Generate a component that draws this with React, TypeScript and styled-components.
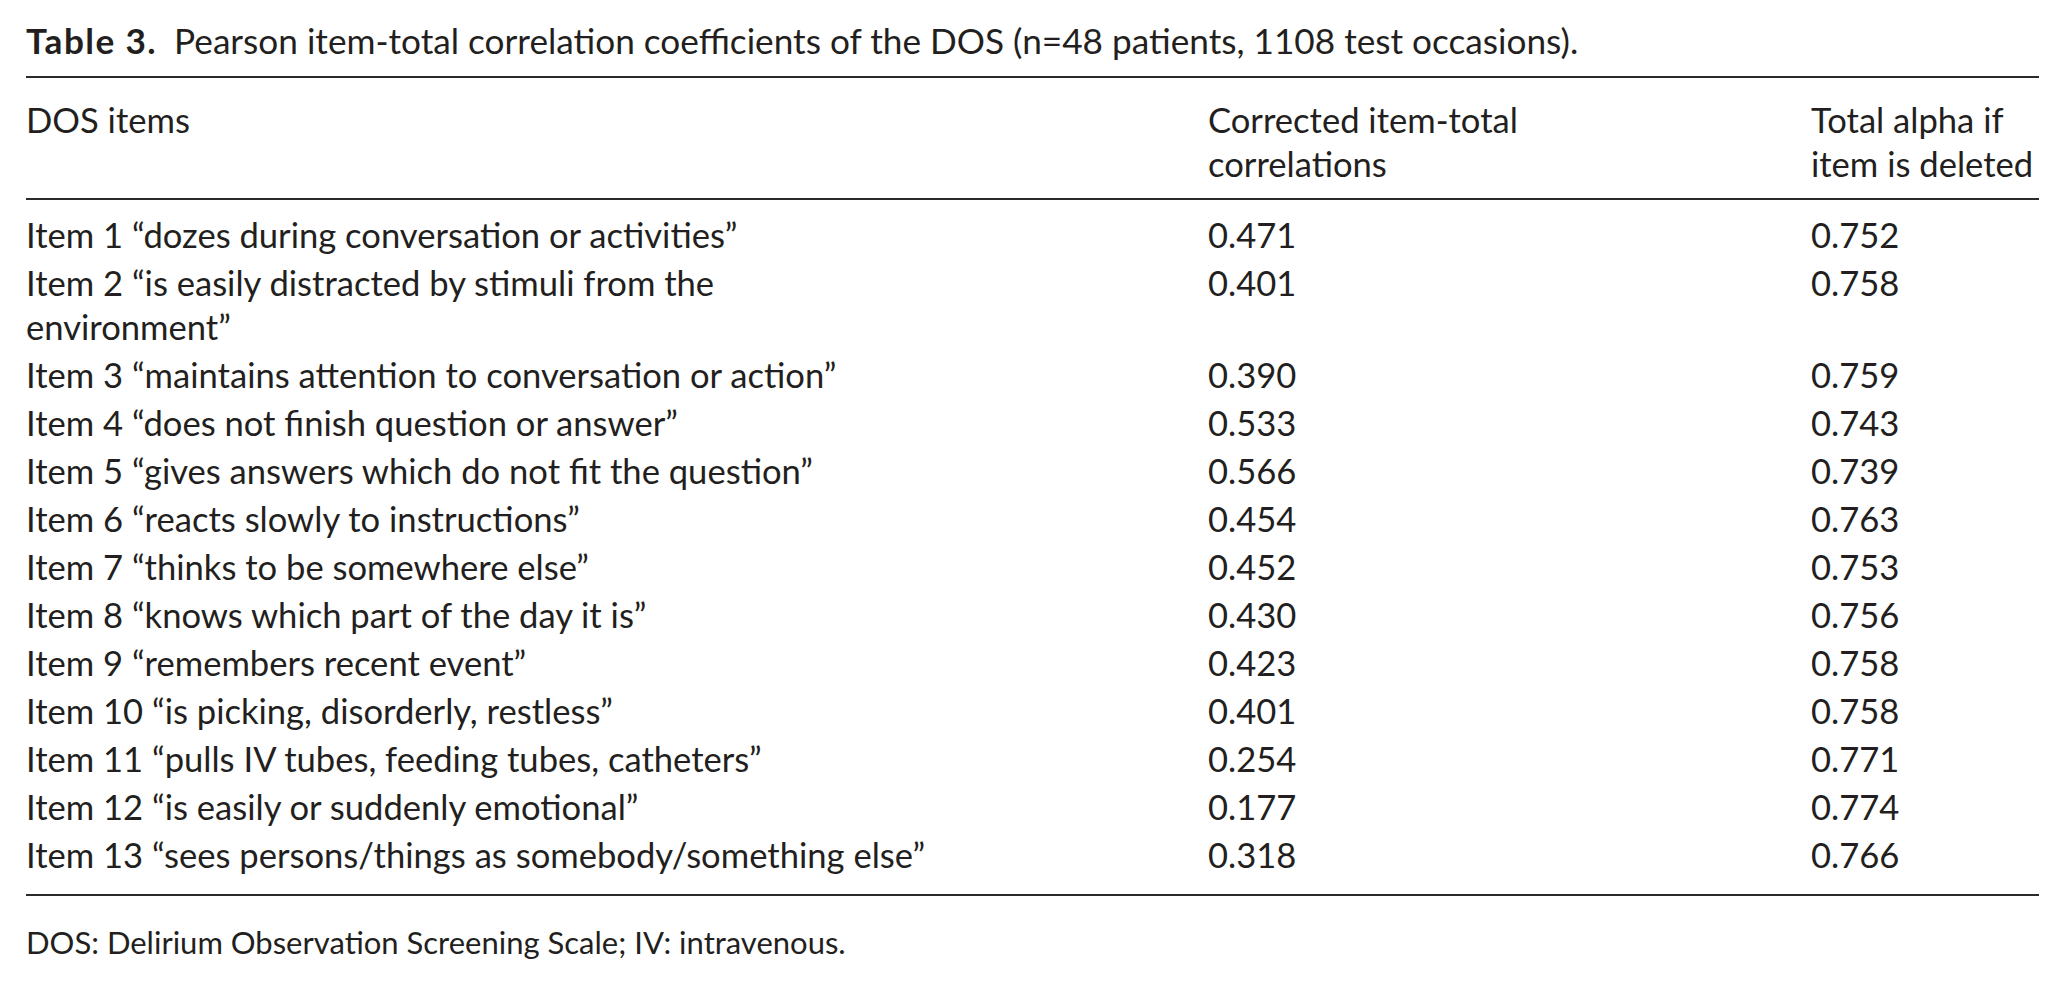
import styled, { createGlobalStyle } from "styled-components";

const GlobalStyle = createGlobalStyle`
  html, body {
    margin: 0;
    padding: 0;
    background: #ffffff;
  }
  body {
    font-family: Lato, "Open Sans", sans-serif;
    color: #231f20;
  }
`;

const Page = styled.div`
  padding: 18px 26px 0 26px;
  background: #ffffff;
`;

const Caption = styled.div`
  font-size: 35.2px;
  line-height: 44px;
  white-space: nowrap;
`;

const Label = styled.span`
  font-weight: 700;
  letter-spacing: 1.4px;
  margin-right: 17px;
`;

const Table = styled.table`
  width: 100%;
  margin-top: 14px;
  border-collapse: collapse;
  border-top: 2px solid #2b2b2b;
  border-bottom: 2px solid #2b2b2b;
  font-size: 34.6px;
  line-height: 44px;
`;

const HeadCell = styled.th`
  text-align: left;
  font-weight: 400;
  vertical-align: top;
  padding: 20px 0 12px 0;
  border-bottom: 2px solid #2b2b2b;
`;

const Row = styled.tr`
  &:first-child td {
    padding-top: 13px;
  }
  &:last-child td {
    padding-bottom: 17px;
  }
`;

const Cell = styled.td`
  vertical-align: top;
  padding: 2px 0;
  white-space: nowrap;
`;

const Footnote = styled.div`
  margin-top: 28px;
  font-size: 31px;
  line-height: 36px;
`;

type Item = { label: string; wrap?: string; r: string; alpha: string };

const items: Item[] = [
  { label: "Item 1 “dozes during conversation or activities”", r: "0.471", alpha: "0.752" },
  {
    label: "Item 2 “is easily distracted by stimuli from the",
    wrap: "environment”",
    r: "0.401",
    alpha: "0.758",
  },
  { label: "Item 3 “maintains attention to conversation or action”", r: "0.390", alpha: "0.759" },
  { label: "Item 4 “does not finish question or answer”", r: "0.533", alpha: "0.743" },
  { label: "Item 5 “gives answers which do not fit the question”", r: "0.566", alpha: "0.739" },
  { label: "Item 6 “reacts slowly to instructions”", r: "0.454", alpha: "0.763" },
  { label: "Item 7 “thinks to be somewhere else”", r: "0.452", alpha: "0.753" },
  { label: "Item 8 “knows which part of the day it is”", r: "0.430", alpha: "0.756" },
  { label: "Item 9 “remembers recent event”", r: "0.423", alpha: "0.758" },
  { label: "Item 10 “is picking, disorderly, restless”", r: "0.401", alpha: "0.758" },
  { label: "Item 11 “pulls IV tubes, feeding tubes, catheters”", r: "0.254", alpha: "0.771" },
  { label: "Item 12 “is easily or suddenly emotional”", r: "0.177", alpha: "0.774" },
  { label: "Item 13 “sees persons/things as somebody/something else”", r: "0.318", alpha: "0.766" },
];

const App = () => {
  return (
    <Page>
      <GlobalStyle />
      <Caption>
        <Label>Table 3.</Label>
        Pearson item-total correlation coefficients of the DOS (n=48 patients, 1108 test occasions).
      </Caption>
      <Table>
        <colgroup>
          <col style={{ width: 1182 }} />
          <col style={{ width: 603 }} />
          <col />
        </colgroup>
        <thead>
          <tr>
            <HeadCell>DOS items</HeadCell>
            <HeadCell>
              Corrected item-total
              <br />
              correlations
            </HeadCell>
            <HeadCell>
              Total alpha if
              <br />
              item is deleted
            </HeadCell>
          </tr>
        </thead>
        <tbody>
          {items.map((item) => (
            <Row key={item.label}>
              <Cell>
                {item.label}
                {item.wrap && (
                  <>
                    <br />
                    {item.wrap}
                  </>
                )}
              </Cell>
              <Cell>{item.r}</Cell>
              <Cell>{item.alpha}</Cell>
            </Row>
          ))}
        </tbody>
      </Table>
      <Footnote>DOS: Delirium Observation Screening Scale; IV: intravenous.</Footnote>
    </Page>
  );
};

export default App;
